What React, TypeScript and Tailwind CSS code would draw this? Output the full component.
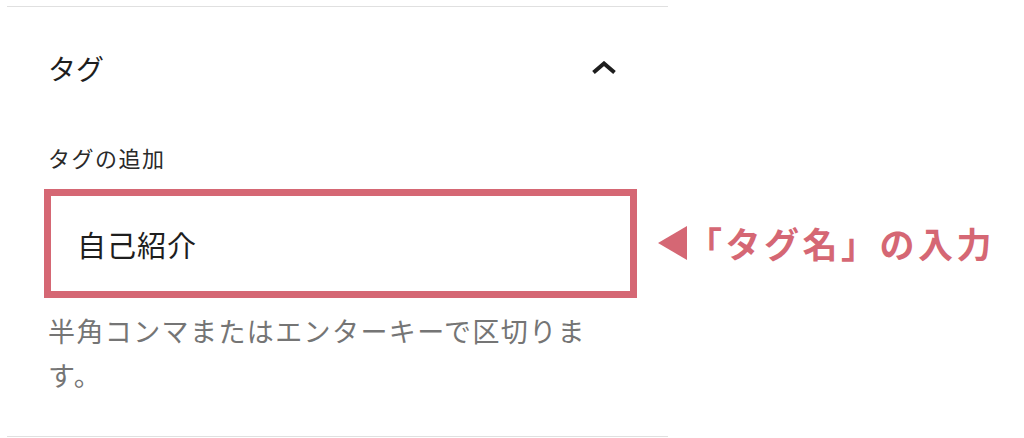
import React from "react";

export default function App() {
  return (
    <div className="relative w-[1024px] h-[438px] bg-white overflow-hidden font-['Noto_Sans_CJK_JP','Noto_Sans',sans-serif]">
      <div className="ml-[7px] mt-[6px] w-[661px] h-[431px] border-t border-b border-[#e0e0e0]">
        <div className="h-[121px] flex items-center justify-between pl-[41px] pr-[51px]">
          <span className="text-[28px] leading-[40px] text-[#1e1e1e]">タグ</span>
          <svg width="26" height="14" viewBox="0 0 26 14" fill="none">
            <polyline points="2.5,11.5 13,2.5 23.5,11.5" stroke="#1e1e1e" strokeWidth="4" strokeLinejoin="miter" />
          </svg>
        </div>
        <div className="mt-[14px] pl-[41px] h-[30px] flex items-center text-[22px] leading-[30px] tracking-[1.5px] text-[#2a2a2a]">
          タグの追加
        </div>
        <div className="mt-[17px] ml-[37px] w-[593px] h-[109px] border-[7px] border-[#d56774] flex items-center pl-[26px]">
          <span className="text-[29px] leading-[40px] tracking-[1px] text-[#1e1e1e]">自己紹介</span>
        </div>
        <p className="mt-[11px] ml-[41px] w-[550px] text-[27px] leading-[44px] tracking-[1.4px] text-[#757575]">
          半角コンマまたはエンターキーで区切ります。
        </p>
      </div>
      <div className="absolute left-[658px] top-[221px] flex items-center">
        <svg width="29" height="34" viewBox="0 0 29 34">
          <polygon points="0,17 29,0 29,34" fill="#d56774" />
        </svg>
        <span className="ml-[0px] text-[35px] leading-[44px] font-bold tracking-[3.5px] text-[#d56774]">
          「タグ名」の入力
        </span>
      </div>
    </div>
  );
}
